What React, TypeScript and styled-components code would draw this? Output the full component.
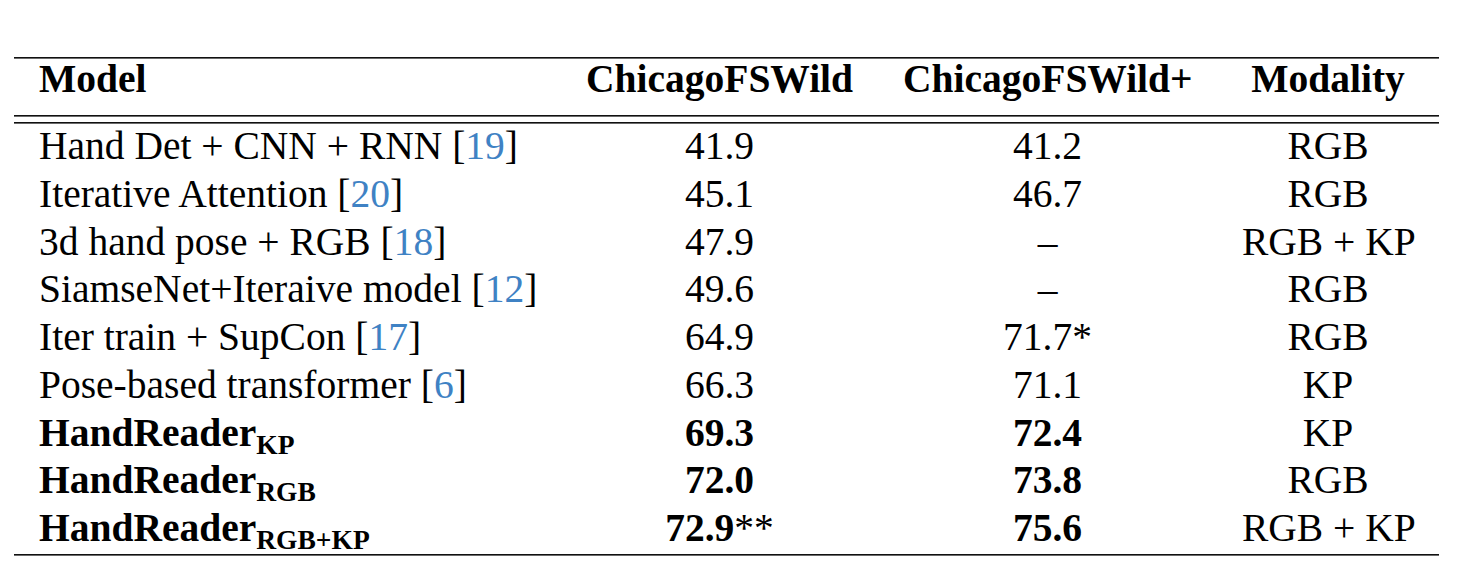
import React from 'react';
import styled, { createGlobalStyle } from 'styled-components';

const GlobalStyle = createGlobalStyle`
  html, body {
    margin: 0;
    padding: 0;
    background: #fff;
  }
  body {
    font-family: "Liberation Serif", "Times New Roman", serif;
    color: #000;
  }
`

// 页面外框
const Page = styled.div`
  width: 1459px;
  height: 570px;
  padding: 57px 0 0 14px;
  box-sizing: border-box;
`

const Table = styled.div`
  width: 1425px;
  display: flex;
  flex-direction: column;
`

const Rule = styled.div<{ $gap?: number }>`
  height: 2px;
  margin-top: ${p => p.$gap || 0}px;
  background: linear-gradient(#111 50%, #6a6a6a 50%);
`

const Row = styled.div<{ $head?: boolean }>`
  display: grid;
  grid-template-columns: 547px 317px 339px 222px;
  box-sizing: border-box;
  height: ${p => (p.$head ? 56 : 47.75)}px;
  padding-top: ${p => (p.$head ? 1 : 3)}px;
  font-family: "Liberation Serif", "Times New Roman", serif;
  font-size: 39.5px;
  line-height: 39.3px;
  font-weight: ${p => (p.$head ? 700 : 400)};
  white-space: nowrap;
`

const Cell = styled.div<{ $left?: boolean; $bold?: boolean }>`
  padding: 0 25px;
  text-align: ${p => (p.$left ? 'left' : 'center')};
  font-weight: ${p => (p.$bold ? 700 : 'inherit')};
`

const Cite = styled.span`
  color: #3f82c4;
`

const Sub = styled.sub`
  font-size: 27.5px;
  line-height: 0;
  vertical-align: -8px;
`

const Star = styled.span`
  font-weight: 400;
`

type RowData = {
  name: React.ReactNode;
  a: React.ReactNode;
  b: React.ReactNode;
  mod: string;
  bold?: boolean;
};

const ref = (n: number) => <>[<Cite>{n}</Cite>]</>;

const rows: RowData[] = [
  { name: <>Hand Det + CNN + RNN {ref(19)}</>, a: '41.9', b: '41.2', mod: 'RGB' },
  { name: <>Iterative Attention {ref(20)}</>, a: '45.1', b: '46.7', mod: 'RGB' },
  { name: <>3d hand pose + RGB {ref(18)}</>, a: '47.9', b: '–', mod: 'RGB + KP' },
  { name: <>SiamseNet+Iteraive model {ref(12)}</>, a: '49.6', b: '–', mod: 'RGB' },
  { name: <>Iter train + SupCon {ref(17)}</>, a: '64.9', b: '71.7*', mod: 'RGB' },
  { name: <>Pose-based transformer {ref(6)}</>, a: '66.3', b: '71.1', mod: 'KP' },
  { name: <>HandReader<Sub>KP</Sub></>, a: '69.3', b: '72.4', mod: 'KP', bold: true },
  { name: <>HandReader<Sub>RGB</Sub></>, a: '72.0', b: '73.8', mod: 'RGB', bold: true },
  { name: <>HandReader<Sub>RGB+KP</Sub></>, a: <>72.9<Star>**</Star></>, b: '75.6', mod: 'RGB + KP', bold: true },
];

export default function App() {
  return (
    <Page>
      <GlobalStyle />
      <Table>
        <Rule />
        <Row $head>
          <Cell $left>Model</Cell>
          <Cell>ChicagoFSWild</Cell>
          <Cell>ChicagoFSWild+</Cell>
          <Cell>Modality</Cell>
        </Row>
        <Rule />
        <Rule $gap={5} />
        {rows.map((r, i) => (
          <Row key={i}>
            <Cell $left $bold={r.bold}>{r.name}</Cell>
            <Cell $bold={r.bold}>{r.a}</Cell>
            <Cell $bold={r.bold}>{r.b}</Cell>
            <Cell>{r.mod}</Cell>
          </Row>
        ))}
        <Rule />
      </Table>
    </Page>
  );
}
